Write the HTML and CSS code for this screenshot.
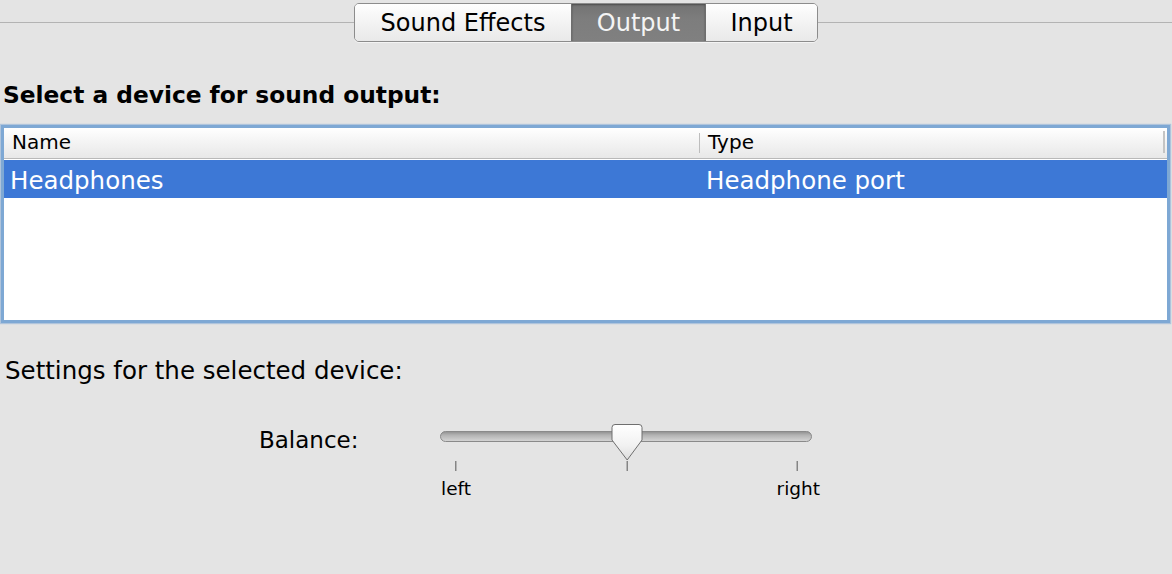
FILE: index.html
```html
<!DOCTYPE html>
<html>
<head>
<meta charset="utf-8">
<link rel="stylesheet" href="styles.css">
</head>
<body>
<div class="topbar">
  <div class="rule"></div>
  <div class="segmented">
    <div class="seg seg-1">Sound Effects</div>
    <div class="seg seg-2 selected">Output</div>
    <div class="seg seg-3">Input</div>
  </div>
  <div class="rule"></div>
</div>

<h1 class="heading">Select a device for sound output:</h1>

<div class="devices">
  <div class="thead">
    <div class="th th-name">Name</div>
    <div class="th th-type">Type</div>
    <div class="th th-end"></div>
  </div>
  <div class="row selected-row">
    <div class="td td-name">Headphones</div>
    <div class="td td-type">Headphone port</div>
  </div>
</div>

<p class="settings-title">Settings for the selected device:</p>

<div class="balance-row">
  <div class="balance-label">Balance:</div>
  <div class="slider">
    <svg class="slider-svg" width="380" height="48" viewBox="0 0 380 48">
      <defs>
        <linearGradient id="trackGrad" x1="0" y1="0" x2="0" y2="1">
          <stop offset="0" stop-color="#8f8f8f"/>
          <stop offset="0.35" stop-color="#b2b2b2"/>
          <stop offset="1" stop-color="#d6d6d6"/>
        </linearGradient>
        <linearGradient id="thumbGrad" x1="0" y1="0" x2="0" y2="1">
          <stop offset="0" stop-color="#ffffff"/>
          <stop offset="0.6" stop-color="#f1f1f1"/>
          <stop offset="1" stop-color="#dcdcdc"/>
        </linearGradient>
      </defs>
      <rect x="0.5" y="8.5" width="371" height="10" rx="5" ry="5" fill="url(#trackGrad)" stroke="#8a8a8a" stroke-width="1"/>
      <rect x="15" y="38" width="1.5" height="10" fill="#858585"/>
      <rect x="186.5" y="38" width="1.5" height="10" fill="#858585"/>
      <rect x="356.5" y="38" width="1.5" height="10" fill="#858585"/>
      <path d="M175 1.5 H199 A3 3 0 0 1 202 4.5 V17 L187.2 37 L172 17 V4.5 A3 3 0 0 1 175 1.5 Z" fill="url(#thumbGrad)" stroke="#6f6f6f" stroke-width="1"/>
    </svg>
    <div class="ticklabels">
      <span>left</span>
      <span>right</span>
    </div>
  </div>
</div>
</body>
</html>
```

FILE: styles.css
```css
html, body {
  margin: 0;
  padding: 0;
}
body {
  background: #e4e4e4;
  font-family: "DejaVu Sans", "Liberation Sans", sans-serif;
  color: #000;
  width: 1172px;
  height: 574px;
  overflow: hidden;
}

.topbar {
  display: flex;
  align-items: flex-start;
  height: 46px;
}
.rule {
  flex: 1;
  height: 1px;
  margin-top: 22px;
  background: #b3b3b3;
}
.segmented {
  margin-top: 3px;
  display: flex;
  height: 39px;
  box-sizing: border-box;
  border: 1px solid #8c8c8c;
  border-radius: 5px;
  overflow: hidden;
  box-shadow: 0 1px 0 rgba(255,255,255,0.6);
}
.seg {
  box-sizing: border-box;
  height: 37px;
  padding-top: 2px;
  line-height: 35px;
  font-size: 24px;
  text-align: center;
  background: linear-gradient(#fefefe, #f3f3f3 50%, #e9e9e9);
  color: #000;
}
.seg-1 { width: 216px; }
.seg-2 { width: 134px; border-left: 1px solid #6e6e6e; }
.seg-3 { width: 112px; border-left: 1px solid #6e6e6e; }
.seg.selected {
  background: linear-gradient(#737373, #7d7d7d 40%, #808080);
  color: #f4f4f4;
  box-shadow: inset 0 1px 2px rgba(0,0,0,0.35);
}

.heading {
  margin: 35px 0 0 3px;
  font-size: 23.3px;
  line-height: 28px;
  font-weight: bold;
}

.devices {
  margin: 16px 2px 0 1px;
  height: 198px;
  box-sizing: border-box;
  border: 3px solid #7ea8d4;
  box-shadow: 0 0 1px 1px rgba(140,175,215,0.6);
  background: #fff;
}
.thead {
  display: flex;
  height: 31px;
  box-sizing: border-box;
  border-bottom: 1px solid #b9b9b9;
  background: linear-gradient(#ffffff, #f4f4f4 45%, #e8e8e8);
  font-size: 20px;
  line-height: 29px;
}
.th {
  box-sizing: border-box;
}
.th-name {
  width: 695px;
  padding-left: 8px;
}
.th-type {
  flex: 1;
  padding-left: 9px;
  position: relative;
}
.th-type::before {
  content: "";
  position: absolute;
  left: 0;
  top: 5px;
  height: 20px;
  width: 1px;
  background: #bdbdbd;
}
.th-end {
  width: 4px;
  position: relative;
}
.th-end::before {
  content: "";
  position: absolute;
  left: 0;
  top: 3px;
  height: 22px;
  width: 2px;
  background: #c4c4c4;
}
.row {
  display: flex;
  margin-top: 1px;
  height: 38px;
  box-sizing: border-box;
  padding-top: 3px;
  font-size: 24.5px;
  line-height: 35px;
}
.selected-row {
  background: #3d78d6;
  color: #fff;
}
.td-name {
  width: 695px;
  box-sizing: border-box;
  padding-left: 6px;
}
.td-type {
  flex: 1;
  padding-left: 7px;
}

.settings-title {
  margin: 33px 0 0 5px;
  font-size: 24.5px;
  line-height: 30px;
}

.balance-row {
  display: flex;
  margin-top: 37px;
  padding-left: 259px;
}
.balance-label {
  width: 181px;
  margin-top: 3px;
  font-size: 23px;
  line-height: 28px;
}
.slider {
  width: 380px;
}
.slider-svg {
  display: block;
}
.ticklabels {
  display: flex;
  justify-content: space-between;
  margin-top: 7px;
  padding-left: 1px;
  font-size: 18.5px;
  line-height: 22px;
}
```
